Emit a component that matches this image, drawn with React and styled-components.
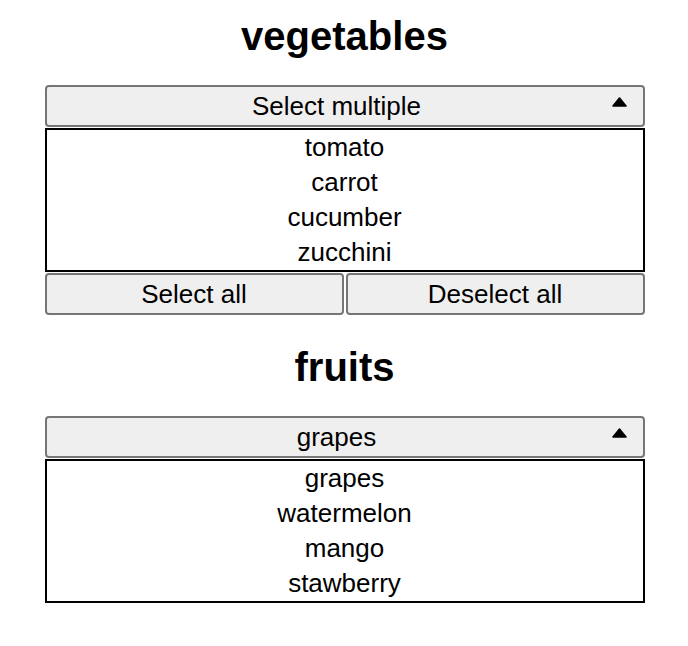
import React from 'react'
import styled, { createGlobalStyle } from 'styled-components'

const GlobalStyle = createGlobalStyle`
    body {
        margin: 0;
        background: #ffffff;
        font-family: "Liberation Sans", Arial, sans-serif;
        color: #000000;
    }
`

const Page = styled.div`
    width: 600px;
    margin: 0 auto;
    padding: 13px 0 0 1px;
    display: flex;
    flex-direction: column;
    gap: 29px;
`

const Section = styled.div`
    display: flex;
    flex-direction: column;
`

const Title = styled.h2`
    margin: 0 0 26px 0;
    font-size: 40px;
    line-height: 46px;
    font-weight: 700;
    text-align: center;
`

const Header = styled.div`
    height: 42px;
    box-sizing: border-box;
    display: flex;
    align-items: center;
    padding: 0 16px 0 0;
    background: #efefef;
    border: 2px solid #767676;
    border-radius: 4px;
    font-size: 26px;
    margin-bottom: 1px;
`

const HeaderText = styled.span`
    flex: 1;
    text-align: center;
`

const Arrow = styled.svg`
    width: 15px;
    height: 10px;
    margin-left: -15px;
    margin-bottom: 8px;
    flex-shrink: 0;
`

const List = styled.ul`
    list-style: none;
    margin: 0;
    padding: 0;
    border: 2px solid #000000;
`

const Item = styled.li`
    height: 35px;
    line-height: 35px;
    font-size: 26px;
    text-align: center;
`

const Actions = styled.div`
    display: grid;
    grid-template-columns: 1fr 1fr;
    gap: 2px;
    margin-top: 1px;
`

const ActionButton = styled.button`
    height: 42px;
    box-sizing: border-box;
    background: #efefef;
    border: 2px solid #767676;
    border-radius: 4px;
    font-family: "Liberation Sans", Arial, sans-serif;
    font-size: 26px;
    color: #000000;
    padding: 0;
`

const Dropdown = ({ label, items }) => (
    <>
        <Header>
            <HeaderText>{label}</HeaderText>
            <Arrow viewBox="0 0 15 10">
                <path d="M7.5 1 L14 9 L1 9 Z" fill="#000" stroke="#000" strokeWidth="1.6" strokeLinejoin="round" />
            </Arrow>
        </Header>
        <List>
            {items.map(item => <Item key={item}>{item}</Item>)}
        </List>
    </>
)

const App = () => (
    <Page>
        <GlobalStyle />
        <Section>
            <Title>vegetables</Title>
            <Dropdown label="Select multiple" items={['tomato', 'carrot', 'cucumber', 'zucchini']} />
            <Actions>
                <ActionButton>Select all</ActionButton>
                <ActionButton>Deselect all</ActionButton>
            </Actions>
        </Section>
        <Section>
            <Title>fruits</Title>
            <Dropdown label="grapes" items={['grapes', 'watermelon', 'mango', 'stawberry']} />
        </Section>
    </Page>
)

export default App
